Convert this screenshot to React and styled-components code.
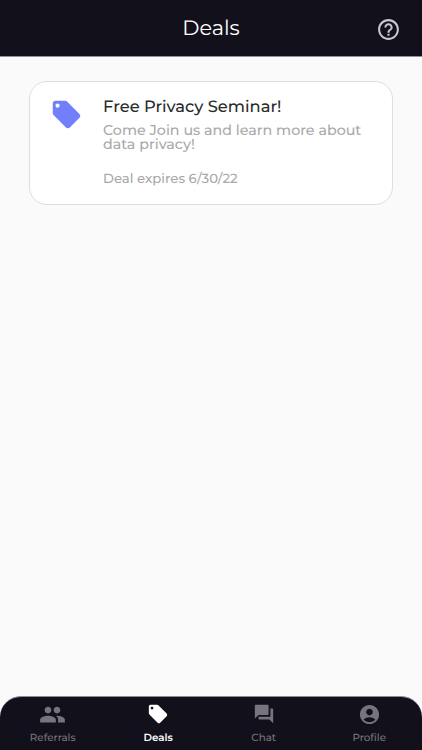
import React from "react";
import styled, { createGlobalStyle } from "styled-components";
import {
	MdAccountCircle,
	MdHelpOutline,
	MdLocalOffer,
	MdPeople,
	MdQuestionAnswer,
} from "react-icons/md";

const tabs = [
	{ label: "Referrals", Icon: MdPeople, size: 27 },
	{ label: "Deals", Icon: MdLocalOffer, size: 22 },
	{ label: "Chat", Icon: MdQuestionAnswer, size: 22 },
	{ label: "Profile", Icon: MdAccountCircle, size: 23 },
];

function App() {
	return (
		<Screen>
			<GlobalStyle />
			<Header>
				<HeaderTitle>Deals</HeaderTitle>
				<HelpButton aria-label="Help">
					<MdHelpOutline size={25} />
				</HelpButton>
			</Header>
			<Content>
				<DealCard>
					<DealIcon>
						<MdLocalOffer size={33} />
					</DealIcon>
					<div>
						<DealTitle>Free Privacy Seminar!</DealTitle>
						<DealText>
							Come Join us and learn more about data privacy!
						</DealText>
						<DealExpiry>Deal expires 6/30/22</DealExpiry>
					</div>
				</DealCard>
			</Content>
			<TabBar>
				{tabs.map(({ label, Icon, size }) => (
					<Tab key={label} $active={label === "Deals"}>
						<TabIcon $large={size > 24}>
							<Icon size={size} />
						</TabIcon>
						<TabLabel $active={label === "Deals"}>{label}</TabLabel>
					</Tab>
				))}
			</TabBar>
		</Screen>
	);
}

export default App;

const GlobalStyle = createGlobalStyle`
	* {
		box-sizing: border-box;
	}

	body {
		margin: 0;
		background: #fafafa;
		font-family: Montserrat, Inter, sans-serif;
		text-rendering: geometricPrecision;
	}

	h1, h2, p {
		margin: 0;
	}

	svg {
		display: block;
	}
`;

const Screen = styled.div`
	display: flex;
	flex-direction: column;
	height: 100vh;
	overflow: hidden;
`;

const Header = styled.header`
	display: grid;
	grid-template-columns: 67px 1fr 67px;
	align-items: center;
	height: 57px;
	background: #12101a;
	border-bottom: 1px solid #918f9a;
`;

const HeaderTitle = styled.h1`
	grid-column: 2;
	padding-top: 1px;
	color: #fff;
	font-size: 20.8px;
	font-weight: 400;
	line-height: 26px;
	text-align: center;
`;

const HelpButton = styled.button`
	display: flex;
	justify-content: center;
	padding: 2px 0 0;
	border: 0;
	background: none;
	color: #c8c7cb;
`;

const Content = styled.main`
	flex: 1;
	padding: 24px 29px;
`;

const DealCard = styled.article`
	display: flex;
	height: 124px;
	padding: 15px 25px 0 0;
	border: 1px solid #dedede;
	border-radius: 18px;
	background: #fff;
`;

const DealIcon = styled.div`
	flex: none;
	width: 73px;
	padding: 1px 0 0 20px;
	color: #727ffb;
`;

const DealTitle = styled.h2`
	color: #2a2a2a;
	font-size: 16.3px;
	font-weight: 500;
	line-height: 20px;
`;

const DealText = styled.p`
	padding-top: 6px;
	color: #a9a9a9;
	font-size: 14.25px;
	font-weight: 500;
	line-height: 14.3px;
`;

const DealExpiry = styled.p`
	padding-top: 18px;
	color: #a9a9a9;
	font-size: 13.25px;
	font-weight: 500;
	line-height: 18px;
`;

const TabBar = styled.nav`
	display: grid;
	grid-template-columns: repeat(4, 1fr);
	height: 54px;
	border-top: 1px solid #8d8b93;
	border-radius: 21px 21px 0 0;
	background: #12101a;
`;

const Tab = styled.div`
	display: flex;
	flex-direction: column;
	align-items: center;
	padding-top: 4px;
	color: ${({ $active }) => ($active ? "#fff" : "#77747f")};
`;

const TabIcon = styled.div`
	display: flex;
	align-items: center;
	height: 27px;
	padding-bottom: ${({ $large }) => ($large ? "0" : "1px")};
`;

const TabLabel = styled.span`
	padding-top: 3px;
	font-size: 10.3px;
	font-weight: ${({ $active }) => ($active ? 600 : 500)};
	line-height: 13px;
`;
